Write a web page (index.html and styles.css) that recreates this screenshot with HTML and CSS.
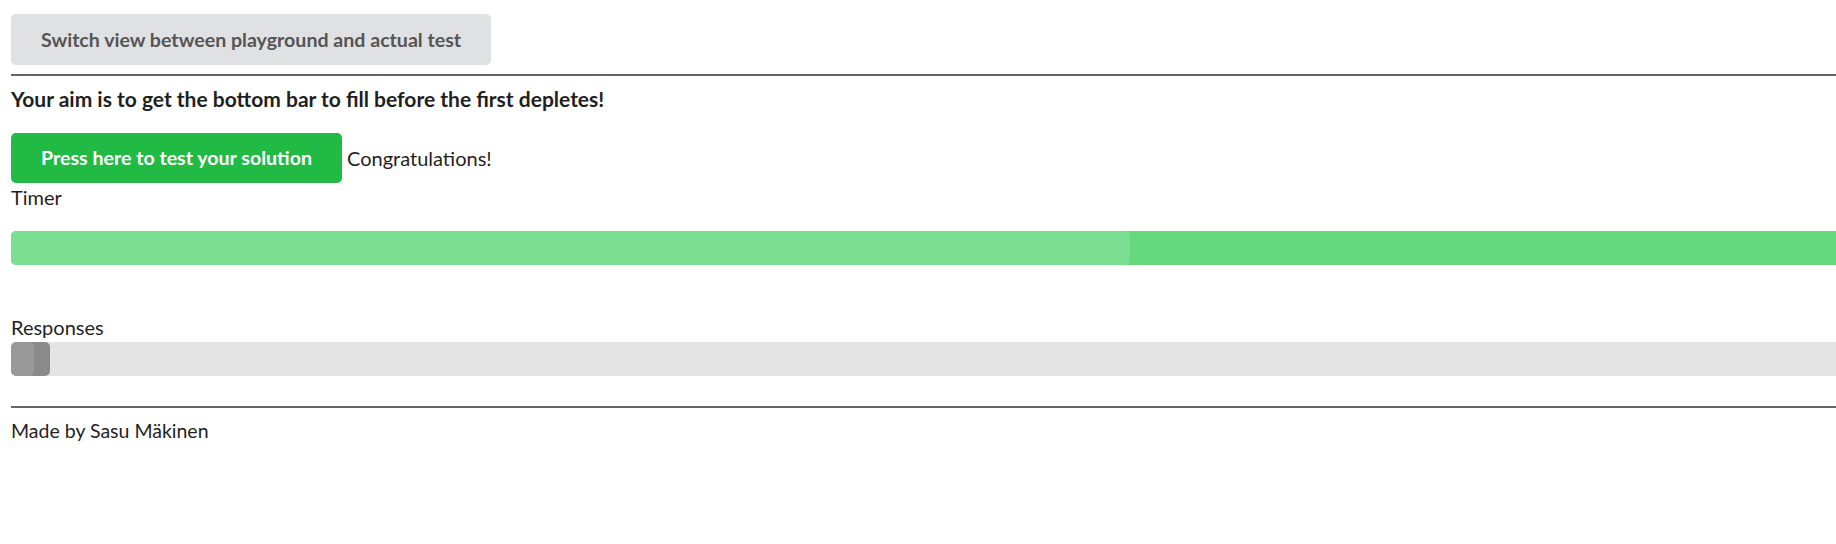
FILE: index.html
```html
<!DOCTYPE html>
<html lang="en">
<head>
<meta charset="utf-8">
<title>Bar test</title>
<link rel="stylesheet" href="styles.css">
</head>
<body>
<div class="page">
  <button class="btn btn-switch">Switch view between playground and actual test</button>
  <hr class="rule rule-top">
  <h3 class="aim">Your aim is to get the bottom bar to fill before the first depletes!</h3>
  <div class="test-row">
    <button class="btn btn-test">Press here to test your solution</button>
    <span class="result">Congratulations!</span>
  </div>
  <div class="label label-timer">Timer</div>
  <div class="bar bar-timer">
    <div class="fill fill-timer" style="width:1119px"></div>
  </div>
  <div class="label label-responses">Responses</div>
  <div class="bar bar-responses">
    <div class="fill fill-responses" style="width:39px">
      <div class="fill-inner" style="width:23px"></div>
    </div>
  </div>
  <hr class="rule rule-bottom">
  <div class="footer">Made by Sasu Mäkinen</div>
</div>
</body>
</html>
```

FILE: styles.css
```css
html, body {
  margin: 0;
  padding: 0;
  background: #ffffff;
}

body {
  font-family: Lato, "Noto Sans", sans-serif;
  font-size: 20px;
  line-height: 24px;
  color: #1f1f1f;
}

.page {
  padding: 14px 0 0 11px;
  display: flex;
  flex-direction: column;
  align-items: flex-start;
}

.btn {
  font-family: Lato, "Noto Sans", sans-serif;
  font-weight: 700;
  font-size: 19.6px;
  line-height: 24px;
  border: none;
  border-radius: 5px;
  padding: 0 30px;
  cursor: pointer;
  margin: 0;
}

.btn-switch {
  height: 51px;
  background: #e0e1e2;
  color: #555555;
}

.rule {
  align-self: stretch;
  border: none;
  height: 2px;
  background: #666666;
  margin: 0;
}

.rule-top {
  margin-top: 9px;
}

.aim {
  margin: 10px 0 0 0;
  font-size: 21px;
  line-height: 25px;
  font-weight: 700;
}

.test-row {
  margin-top: 22px;
  display: flex;
  align-items: center;
  gap: 5px;
  height: 50px;
}

.btn-test {
  height: 50px;
  background: #21ba45;
  color: #ffffff;
}

.label-timer {
  margin-top: 2px;
}

.bar {
  align-self: stretch;
  height: 34px;
  border-radius: 5px 0 0 5px;
  overflow: hidden;
  display: flex;
}

.bar-timer {
  margin-top: 22px;
  background: #66d97f;
}

.fill {
  height: 100%;
  border-radius: 5px;
}

.fill-timer {
  background: #7bdf91;
}

.label-responses {
  margin-top: 50px;
}

.bar-responses {
  margin-top: 3px;
  background: #e4e4e4;
}

.fill-responses {
  background: #8a8a8a;
}

.fill-inner {
  height: 100%;
  background: #999999;
  border-radius: 5px;
}

.rule-bottom {
  margin-top: 30px;
}

.footer {
  margin-top: 11px;
  font-size: 19.5px;
}
```
